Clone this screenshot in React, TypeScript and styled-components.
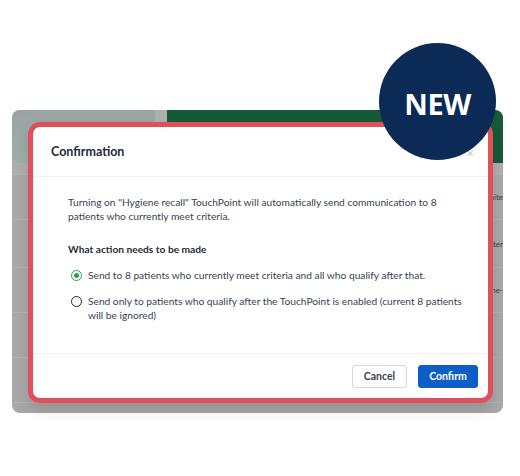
import React from "react";
import styled, { createGlobalStyle } from "styled-components";

const Global = createGlobalStyle`
  html, body { margin: 0; padding: 0; background: #ffffff; }
  body { font-family: "Lato", "Noto Sans", sans-serif; }
  * { box-sizing: border-box; }
`;

const Stage = styled.div`
  position: relative;
  width: 520px;
  height: 476px;
  padding: 110px 17px 63px 12px;
  overflow: hidden;
`;

const Backdrop = styled.div`
  display: flex;
  flex-direction: column;
  width: 100%;
  height: 100%;
  border-radius: 8px;
  overflow: hidden;
  background: #a8a8a8;
`;

const TopBar = styled.div`
  display: flex;
  height: 53px;
`;

const Brand = styled.div`
  width: 143px;
  background: linear-gradient(180deg, #97a4a2 0%, #a1adab 100%);
`;

const Gap = styled.div`
  width: 12px;
  background: #b0b0b0;
`;

const GreenBar = styled.div`
  flex: 1;
  background: #145a37;
`;

const TableHead = styled.div`
  height: 12px;
  background: #aeaeae;
  border-bottom: 1px solid #b4b4b4;
`;

const Row = styled.div<{ $h: number }>`
  display: flex;
  justify-content: flex-end;
  align-items: center;
  height: ${(p) => p.$h}px;
  border-bottom: 1px solid #b3b3b3;
  font-family: "Lato", sans-serif;
  font-size: 8px;
  color: #3b3b3b;
  white-space: nowrap;
`;

const Dialog = styled.div`
  position: absolute;
  left: 28px;
  top: 122px;
  width: 465px;
  height: 281px;
  display: flex;
  flex-direction: column;
  background: #ffffff;
  border: 5px solid #e0505b;
  border-radius: 12px;
  box-shadow: 0 8px 14px rgba(0, 0, 0, 0.12);
  overflow: hidden;
`;

const Header = styled.div`
  display: flex;
  align-items: center;
  justify-content: space-between;
  height: 50px;
  padding: 0 14px 0 18px;
  border-bottom: 1px solid #eef0f2;
`;

const Title = styled.div`
  font-size: 12.5px;
  font-weight: 700;
  color: #1f2a3a;
`;

const Close = styled.div`
  font-size: 10px;
  color: #c3c7cc;
  line-height: 1;
  margin-top: 2px;
`;

const Body = styled.div`
  flex: 1;
  padding: 18px 12px 0 35px;
  font-size: 10.2px;
  line-height: 14px;
  color: #3a4252;
  white-space: nowrap;
`;

const Para = styled.p`
  margin: 0;
`;

const Heading = styled.div`
  margin-top: 19px;
  font-weight: 700;
  color: #1f2a3a;
`;

const Option = styled.div`
  display: flex;
  align-items: flex-start;
  gap: 6px;
  margin-top: 12px;
  padding-left: 3px;
`;

const Radio = styled.span<{ $checked?: boolean }>`
  flex: none;
  display: flex;
  align-items: center;
  justify-content: center;
  width: 11px;
  height: 11px;
  margin-top: 1.5px;
  border-radius: 50%;
  border: 1.5px solid ${(p) => (p.$checked ? "#27a35a" : "#1f2937")};
  &::after {
    content: "";
    display: ${(p) => (p.$checked ? "block" : "none")};
    width: 5px;
    height: 5px;
    border-radius: 50%;
    background: #27a35a;
  }
`;

const Footer = styled.div`
  display: flex;
  justify-content: flex-end;
  align-items: center;
  gap: 11px;
  height: 45px;
  padding-right: 10px;
  border-top: 1px solid #eef0f2;
`;

const Button = styled.button<{ $primary?: boolean }>`
  height: 23px;
  width: ${(p) => (p.$primary ? 60 : 55)}px;
  border-radius: 3px;
  font-family: "Lato", sans-serif;
  font-size: 10.5px;
  font-weight: 700;
  cursor: pointer;
  border: 1px solid ${(p) => (p.$primary ? "#0b5fc7" : "#d3d8de")};
  background: ${(p) => (p.$primary ? "#0b5fc7" : "#ffffff")};
  color: ${(p) => (p.$primary ? "#ffffff" : "#3b4455")};
`;

const Badge = styled.div`
  position: absolute;
  left: 379px;
  top: 43px;
  width: 117px;
  height: 117px;
  border-radius: 50%;
  background: #0c2a56;
  display: flex;
  align-items: center;
  justify-content: center;
  padding-top: 3px;
  color: #ffffff;
  font-family: "Open Sans", "Noto Sans", sans-serif;
  font-weight: 700;
  font-size: 29px;
  letter-spacing: -0.5px;
`;

export default function App() {
  return (
    <>
      <Global />
      <Stage>
        <Backdrop>
          <TopBar>
            <Brand />
            <Gap />
            <GreenBar />
          </TopBar>
          <TableHead />
          <Row $h={45}>aite</Row>
          <Row $h={48}>ter</Row>
          <Row $h={45}>he-</Row>
          <Row $h={45}></Row>
          <Row $h={45}></Row>
        </Backdrop>
        <Dialog>
          <Header>
            <Title>Confirmation</Title>
            <Close>✕</Close>
          </Header>
          <Body>
            <Para>
              Turning on "Hygiene recall" TouchPoint will automatically send communication to 8
              <br />
              patients who currently meet criteria.
            </Para>
            <Heading>What action needs to be made</Heading>
            <Option>
              <Radio $checked />
              <span>Send to 8 patients who currently meet criteria and all who qualify after that.</span>
            </Option>
            <Option>
              <Radio />
              <span>
                Send only to patients who qualify after the TouchPoint is enabled (current 8 patients
                <br />
                will be ignored)
              </span>
            </Option>
          </Body>
          <Footer>
            <Button>Cancel</Button>
            <Button $primary>Confirm</Button>
          </Footer>
        </Dialog>
        <Badge>NEW</Badge>
      </Stage>
    </>
  );
}
